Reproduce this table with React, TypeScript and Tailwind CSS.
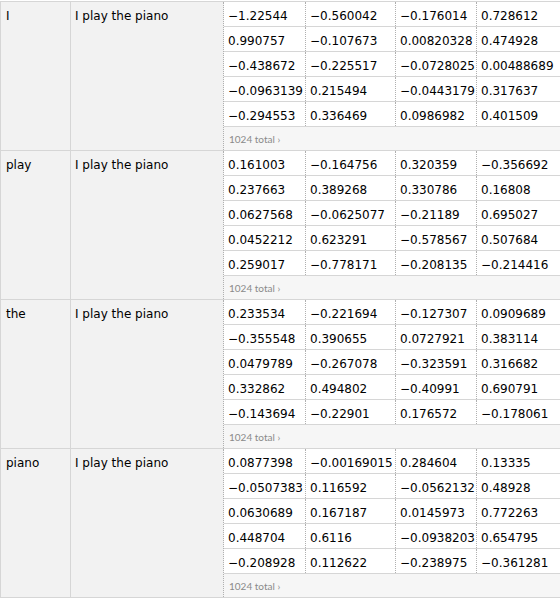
const sections: { word: string; rows: string[][] }[] = [
  {
    word: "I",
    rows: [
      ["−1.22544", "−0.560042", "−0.176014", "0.728612"],
      ["0.990757", "−0.107673", "0.00820328", "0.474928"],
      ["−0.438672", "−0.225517", "−0.0728025", "0.00488689"],
      ["−0.0963139", "0.215494", "−0.0443179", "0.317637"],
      ["−0.294553", "0.336469", "0.0986982", "0.401509"],
    ],
  },
  {
    word: "play",
    rows: [
      ["0.161003", "−0.164756", "0.320359", "−0.356692"],
      ["0.237663", "0.389268", "0.330786", "0.16808"],
      ["0.0627568", "−0.0625077", "−0.21189", "0.695027"],
      ["0.0452212", "0.623291", "−0.578567", "0.507684"],
      ["0.259017", "−0.778171", "−0.208135", "−0.214416"],
    ],
  },
  {
    word: "the",
    rows: [
      ["0.233534", "−0.221694", "−0.127307", "0.0909689"],
      ["−0.355548", "0.390655", "0.0727921", "0.383114"],
      ["0.0479789", "−0.267078", "−0.323591", "0.316682"],
      ["0.332862", "0.494802", "−0.40991", "0.690791"],
      ["−0.143694", "−0.22901", "0.176572", "−0.178061"],
    ],
  },
  {
    word: "piano",
    rows: [
      ["0.0877398", "−0.00169015", "0.284604", "0.13335"],
      ["−0.0507383", "0.116592", "−0.0562132", "0.48928"],
      ["0.0630689", "0.167187", "0.0145973", "0.772263"],
      ["0.448704", "0.6116", "−0.0938203", "0.654795"],
      ["−0.208928", "0.112622", "−0.238975", "−0.361281"],
    ],
  },
];

const colWidths = ["w-[82px]", "w-[90px]", "w-[81px]", "w-[84px]"];

function Vector({ rows }: { rows: string[][] }) {
  return (
    <div className="flex flex-col">
      {rows.map((row, i) => (
        <div key={i} className="flex h-[25px] border-b border-[#d6d6d6] bg-white">
          {row.map((v, j) => (
            <div
              key={j}
              className={`${colWidths[j]} shrink-0 border-r border-dotted border-[#b0b0b0] pl-[4px] pt-[7px] leading-[14px] whitespace-nowrap`}
            >
              {v}
            </div>
          ))}
        </div>
      ))}
      <div className="h-[23px] bg-[#f6f6f6] pl-[5px] pt-[6px] font-['Lato',sans-serif] text-[10px] leading-[12px] text-[#8a8a8a]">
        1024 total ›
      </div>
    </div>
  );
}

export default function App() {
  return (
    <div className="w-[560px] h-[614px] overflow-hidden bg-white pt-[1px] font-['DejaVu_Sans',sans-serif] text-[12px] text-black">
      <div className="w-[600px] border-t border-l border-[#d6d6d6]">
        {sections.map((s) => (
          <div key={s.word} className="flex border-b border-[#d6d6d6]">
            <div className="w-[70px] shrink-0 border-r border-[#d6d6d6] bg-[#f2f2f2] pl-[5px] pt-[7px] leading-[14px]">
              {s.word}
            </div>
            <div className="w-[153px] shrink-0 border-r border-dotted border-[#b0b0b0] bg-[#f2f2f2] pl-[4px] pt-[7px] leading-[14px]">
              I play the piano
            </div>
            <div className="flex-1">
              <Vector rows={s.rows} />
            </div>
          </div>
        ))}
      </div>
    </div>
  );
}
